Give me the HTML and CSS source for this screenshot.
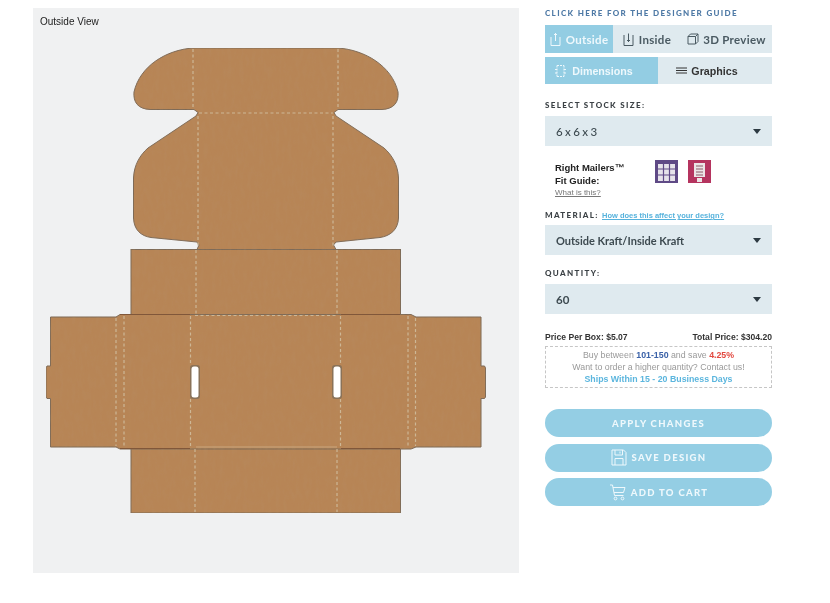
FILE: index.html
```html
<!DOCTYPE html>
<html lang="en">
<head>
<meta charset="utf-8">
<title>Box designer</title>
<link rel="stylesheet" href="styles.css">
</head>
<body>
<div class="page">
  <main class="canvas">
    <span class="view-label">Outside View</span>
    <svg class="dieline" width="486" height="565" viewBox="33 8 486 565" aria-hidden="true">
      <defs>
        <filter id="grain" x="0" y="0" width="100%" height="100%">
          <feTurbulence type="fractalNoise" baseFrequency="0.25 0.09" numOctaves="2" seed="4"/>
          <feColorMatrix values="0 0 0 0 0.46  0 0 0 0 0.29  0 0 0 0 0.14  0 0 0 0.35 -0.12"/>
          <feComposite in2="SourceGraphic" operator="in"/>
          <feMerge><feMergeNode in="SourceGraphic"/><feMergeNode/></feMerge>
        </filter>
      </defs>
      <g filter="url(#grain)" fill="#b78557" stroke="#7d6a58" stroke-width="1">
        <path d="M193 48H338C365 50 392 66 398 92C399 102 394 109 382 109.500H338L334 112.500L336 116L384 148C392 155 398 165 398.500 178V218C398 230 390 236 380 237.500L336 242L333.500 245L336 249.500H197L199 245L197 242L151 237.500C141 236 134 230 133.500 218V178C134 165 140 155 148 148L196 116L198 112.500L194 109.500H150C138 109 133 102 134 92C140 66 166 50 193 48Z"/>
        <rect x="131" y="249.500" width="269.500" height="65"/>
        <rect x="131" y="448.500" width="269.500" height="64.500"/>
        <path d="M50.500 317H116L120 314.500H411L416 317H481V366H484.500L485.500 368V397L484.500 398.500H481V447H416L411 449H120L116 447H50.500V398.500H47L46 397V368L47 366H50.500Z"/>
      </g>
      <g fill="none" stroke="#80573a" stroke-width="1.200">
        <path d="M120 314.500H190M341 314.500H400M120 448.500H190M341 448.500H400"/>
      </g>
      <path class="fold-faint" d="M196 447H337"/>
      <g class="folds">
        <path d="M193 49V109M338 49V109M199 113H333M198 116V248M333 116V248M196 250V314M337 250V314M195 315.500H337M190.500 316V365M190.500 399V448M340.500 316V365M340.500 399V448M195 449V512M337 449V512"/>
        <path d="M116 318V446M124 316V448M408 316V448M415.500 318V446"/>
      </g>
      <rect class="slot-rim" x="190" y="365" width="10" height="34" rx="3"/>
      <rect class="slot-rim" x="332" y="365" width="10" height="34" rx="3"/>
      <rect class="slot" x="191.500" y="366.500" width="7" height="31" rx="2.500"/>
      <rect class="slot" x="333.500" y="366.500" width="7" height="31" rx="2.500"/>
    </svg>
  </main>

  <aside class="panel">
    <a class="guide-link">CLICK HERE FOR THE DESIGNER GUIDE</a>

    <div class="tabs tabs-view">
      <div class="tab tab-outside is-active">
        <svg class="ico" width="11" height="15" viewBox="0 0 11 15"><path d="M5.500 1V9M4 2.500H7M1 5V13.500H10V5"/></svg>
        Outside
      </div>
      <div class="tab tab-inside">
        <svg class="ico" width="11" height="15" viewBox="0 0 11 15"><path d="M5.500 1.500V10M4 8.500H7M1 3V13.500H10V3"/></svg>
        Inside
      </div>
      <div class="tab tab-preview">
        <svg class="ico" width="12" height="12" viewBox="0 0 12 12"><path d="M1 3.500H8.500V11H1ZM1 3.500L3.500 1H11V8.500L8.500 11M8.500 3.500L11 1"/></svg>
        3D Preview
      </div>
    </div>

    <div class="tabs tabs-mode">
      <div class="tab tab-half tab-dim is-active">
        <svg class="ico" width="13" height="14" viewBox="0 0 13 14"><path d="M3 1.500H10M3 12.500H10M3 1.500V12.500M10 1.500V12.500M1 5.500H3M10 5.500H12M1 9H3M10 9H12" stroke-dasharray="2 1"/></svg>
        Dimensions
      </div>
      <div class="tab tab-half tab-gfx">
        <svg class="ico" width="13" height="7" viewBox="0 0 13 7"><path d="M1 1H12M1 3.500H12M1 6H12"/></svg>
        Graphics
      </div>
    </div>

    <label class="field-label label-size">SELECT STOCK SIZE:</label>
    <div class="select select-size"><span>6 x 6 x 3</span><i class="caret"></i></div>

    <div class="fit">
      <div class="fit-text">
        <strong>Right Mailers™<br>Fit Guide:</strong>
        <a class="fit-what">What is this?</a>
      </div>
      <svg class="fit-icon" width="23" height="23" viewBox="0 0 23 23">
        <rect width="23" height="23" fill="#5f4a86"/>
        <rect x="3" y="4" width="17" height="17" fill="#e6e3ea"/>
        <path d="M3 9H20M3 15H20M8.500 4V21M14.500 4V21" stroke="#5f4a86" stroke-width="1.200" fill="none"/>
      </svg>
      <svg class="fit-icon fit-icon-2" width="23" height="23" viewBox="0 0 23 23">
        <rect width="23" height="23" fill="#b5345f"/>
        <rect x="6" y="3" width="11" height="14" fill="#ece4e6"/>
        <path d="M8 6H15M8 9H15M8 12H15M8 15H15" stroke="#8a5a68" stroke-width="1.100" fill="none"/>
        <rect x="9" y="18" width="5" height="4" fill="#ece4e6"/>
      </svg>
    </div>

    <div class="field-label label-material">MATERIAL: <a class="affect">How does this affect your design?</a></div>
    <div class="select select-material"><span>Outside Kraft/Inside Kraft</span><i class="caret"></i></div>

    <label class="field-label label-qty">QUANTITY:</label>
    <div class="select select-qty"><span>60</span><i class="caret"></i></div>

    <div class="prices"><span>Price Per Box: $5.07</span><span>Total Price: $304.20</span></div>

    <div class="offer">
      <div>Buy between <b class="blue">101-150</b> and save <b class="red">4.25%</b></div>
      <div>Want to order a higher quantity? Contact us!</div>
      <div class="ships">Ships Within 15 - 20 Business Days</div>
    </div>

    <button class="cta cta-apply">APPLY CHANGES</button>
    <button class="cta">
      <svg class="ico ico-cta" width="16" height="17" viewBox="0 0 16 17"><path d="M1 1H12.500L15 3.500V16H1ZM4 1V6H11.500V1M4 16V9.500H12V16M9 2.500V4.500"/></svg>
      SAVE DESIGN
    </button>
    <button class="cta">
      <svg class="ico ico-cta" width="17" height="17" viewBox="0 0 17 17"><path d="M1 1H3.500L5.500 11.500H14.500M4 3.500H16L14.500 8.500H5"/><circle cx="6.500" cy="14.500" r="1.400"/><circle cx="13.500" cy="14.500" r="1.400"/></svg>
      ADD TO CART
    </button>
  </aside>
</div>
</body>
</html>
```
FILE: styles.css
```css
* { box-sizing: border-box; }
html, body { margin: 0; padding: 0; background: #fff; }
body { font-family: "Lato", "Liberation Sans", sans-serif; color: #34424a; }

.page {
  display: flex;
  align-items: flex-start;
  width: 830px;
  height: 603px;
  padding: 8px 0 0 33px;
  overflow: hidden;
  filter: blur(0.4px);
}

.canvas {
  position: relative;
  flex: none;
  width: 486px;
  height: 565px;
  background: #f0f1f2;
}
.view-label {
  position: absolute;
  left: 7px;
  top: 8px;
  font: 10px "Liberation Sans", sans-serif;
  color: #222;
}
.dieline { display: block; }
.folds { fill: none; stroke: #cdb796; stroke-width: 1.200; stroke-dasharray: 3 2.500; }
.fold-faint { fill: none; stroke: #c9a67f; stroke-width: 1; }
.slot-rim { fill: #8a7258; }
.slot { fill: #fff; }

.panel {
  flex: none;
  width: 227px;
  margin-left: 26px;
  display: flex;
  flex-direction: column;
}

.guide-link {
  height: 17px;
  font-size: 8px;
  line-height: 11px;
  font-weight: 900;
  letter-spacing: 1.350px;
  color: #4f7aa6;
  white-space: nowrap;
}

.tabs { display: flex; background: #dfeaef; }
.tabs-view { height: 28px; }
.tabs-mode { height: 27px; margin-top: 4px; }
.tab {
  display: flex;
  align-items: center;
  justify-content: center;
  gap: 5px;
  font-size: 11.500px;
  font-weight: 700;
  letter-spacing: 0.300px;
  color: #4a5a62;
}
.tab.is-active { background: #93cde3; color: #eef8fc; }
.tab-outside { width: 68px; }
.tab-inside { width: 68px; }
.tab-preview { flex: 1; gap: 4px; }
.tab-half { font-family: "Liberation Sans", sans-serif; font-size: 10.700px; letter-spacing: 0; }
.tab-dim { width: 113px; padding-right: 16px; }
.tab-gfx { flex: 1; gap: 3px; padding-right: 17px; color: #333; }
.ico { flex: none; fill: none; stroke: currentColor; stroke-width: 1; }

.field-label {
  display: block;
  font-size: 8px;
  line-height: 11px;
  font-weight: 900;
  letter-spacing: 1.350px;
  color: #3c4246;
  white-space: nowrap;
}
.label-size { margin-top: 16px; }
.label-material { margin-top: 12px; height: 15px; }
.label-qty { margin-top: 13px; }

.select {
  display: flex;
  align-items: center;
  justify-content: space-between;
  background: #dfeaef;
  padding: 0 11px 0 11px;
  font-size: 11px;
  font-weight: 700;
  color: #3d4a50;
}
.select-size { height: 30px; margin-top: 5px; font-size: 11.500px; font-weight: 500; word-spacing: -0.500px; }
.select-material { height: 30px; }
.select-qty { height: 30px; margin-top: 5px; font-size: 11.500px; }
.caret {
  width: 0;
  height: 0;
  border-left: 4.500px solid transparent;
  border-right: 4.500px solid transparent;
  border-top: 5px solid #2d3a42;
}

.fit {
  display: flex;
  align-items: flex-start;
  margin-top: 15px;
  padding-left: 10px;
  height: 37px;
}
.fit-text {
  width: 100px;
  font: 9.500px/13px "Liberation Sans", sans-serif;
  color: #222;
}
.fit-text strong { display: block; }
.fit-what { display: block; font-size: 8px; line-height: 11px; color: #777; text-decoration: underline; }
.fit-icon { flex: none; margin-top: -1px; }
.fit-icon-2 { margin-left: 10px; }

.affect {
  font-family: "Liberation Sans", sans-serif;
  font-size: 7.500px;
  font-weight: 700;
  letter-spacing: 0;
  color: #56b2dc;
  text-decoration: underline;
}

.prices {
  display: flex;
  justify-content: space-between;
  margin-top: 17px;
  font: bold 8.600px/12px "Liberation Sans", sans-serif;
  color: #333;
}

.offer {
  height: 42px;
  margin-top: 3px;
  padding-top: 2px;
  border: 1.500px dashed #c6c6c6;
  text-align: center;
  font: 8.800px/12px "Liberation Sans", sans-serif;
  color: #999;
}
.blue { color: #3b62a8; }
.red { color: #e2483f; }
.ships { color: #5cb6de; font-weight: 700; }

.cta {
  display: flex;
  align-items: center;
  justify-content: center;
  gap: 5px;
  width: 227px;
  height: 28px;
  margin-top: 6.500px;
  padding: 0;
  border: 0;
  border-radius: 14px;
  background: #94cee4;
  color: #eef8fc;
  font-family: "Lato", sans-serif;
  font-size: 9.500px;
  font-weight: 900;
  letter-spacing: 1.300px;
}
.cta-apply { margin-top: 21px; }
```
